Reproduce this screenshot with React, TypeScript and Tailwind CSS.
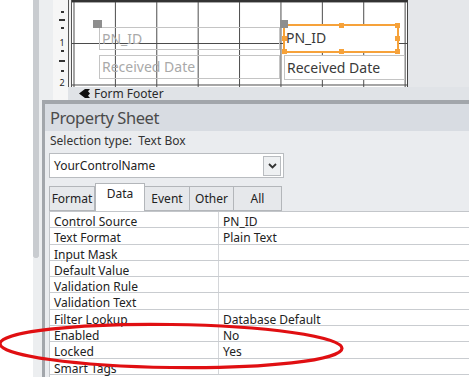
import React from 'react'

const ROWS: [string, string][] = [
  ['Control Source', 'PN_ID'],
  ['Text Format', 'Plain Text'],
  ['Input Mask', ''],
  ['Default Value', ''],
  ['Validation Rule', ''],
  ['Validation Text', ''],
  ['Filter Lookup', 'Database Default'],
  ['Enabled', 'No'],
  ['Locked', 'Yes'],
  ['Smart Tags', ''],
]

const TABS = ['Format', 'Data', 'Event', 'Other', 'All']
const TAB_WIDTHS = ['w-[46px]', 'w-[50px]', 'w-[45px]', 'w-[44px]', 'w-[48px]']

// ruler ticks down the left side of the design grid
const RulerMarks = () => (
  <div className="flex flex-col items-center pt-[11px] pl-[3px] text-[9px] leading-[9px] text-[#222]">
    <div className="w-[3px] h-[2px] bg-[#333]" />
    <div className="w-[6px] h-[2px] bg-[#333] mt-[6px]" />
    <div className="w-[3px] h-[2px] bg-[#333] mt-[6px]" />
    <div className="mt-[9px]">1</div>
    <div className="w-[3px] h-[2px] bg-[#333] mt-[3px]" />
    <div className="w-[6px] h-[2px] bg-[#333] mt-[8px]" />
    <div className="w-[3px] h-[2px] bg-[#333] mt-[8px]" />
    <div className="mt-[6px]">2</div>
  </div>
)

const Handle = ({ className }: { className: string }) => (
  <span className={`absolute w-[5px] h-[5px] bg-[#f6a23a] ${className}`} />
)

export default function App() {
  return (
    <div className="relative w-[469px] h-[377px] overflow-hidden bg-white flex font-['Noto_Sans','Open_Sans',sans-serif]">
      {/* left margin + scroll thumb */}
      <div className="w-[33px] shrink-0 bg-white" />
      <div className="w-[6px] shrink-0 flex flex-col">
        <div className="h-[258px] bg-[#c9ccd0] rounded-b-[2px]" />
        <div className="flex-1 bg-[#eceef0]" />
      </div>

      <div className="flex-1 flex flex-col">
        {/* design area */}
        <div className="h-[87px] flex">
          <div className="w-[14px] bg-[#eceef0]" />
          <div className="w-[15px] bg-[#f6f6f6] overflow-hidden">
            <RulerMarks />
          </div>
          <div className="w-[4px] border-x border-[#555] bg-[#f3f3f3]" />
          <div className="relative w-[336px] border-r border-[#444] border-t-2 border-t-[#333] bg-white bg-[linear-gradient(to_right,#4a4a4a_1px,transparent_1px),linear-gradient(to_bottom,#4a4a4a_1px,transparent_1px)] bg-[size:41.4px_41.5px] bg-[position:1.5px_-0.5px]">
            {/* left labels (ghosted) */}
            <div className="absolute left-[27px] top-[25px] w-[181px] h-[23px] border border-[#c4c4c4] text-[14px] leading-[21px] text-[#a9a9a9] pl-[2px]">PN_ID</div>
            <div className="absolute left-[27px] top-[53px] w-[181px] h-[24px] border border-[#c4c4c4] text-[14px] leading-[22px] text-[#a9a9a9] pl-[2px]">Received Date</div>
            <span className="absolute left-[21px] top-[18px] w-[9px] h-[8px] bg-[#8e8e8e]" />

            {/* right text boxes */}
            <div className="absolute left-[212px] top-[53px] w-[121px] h-[25px] border border-[#c4c4c4] bg-white text-[14px] leading-[23px] text-[#3a3a3a] pl-[2px]">Received Date</div>
            <div className="absolute left-[211px] top-[22px] w-[116px] h-[29px] border-2 border-[#f6a23a] bg-white text-[14px] leading-[23px] text-[#3a3a3a] pl-[1px]">
              PN_ID
              <Handle className="-left-[3px] -top-[3px]" />
              <Handle className="left-[54px] -top-[3px]" />
              <Handle className="-right-[3px] -top-[3px]" />
              <Handle className="-left-[3px] top-[10px]" />
              <Handle className="-right-[3px] top-[10px]" />
              <Handle className="-left-[3px] -bottom-[3px]" />
              <Handle className="left-[54px] -bottom-[3px]" />
              <Handle className="-right-[3px] -bottom-[3px]" />
            </div>
            <span className="absolute left-[208px] top-[18px] w-[8px] h-[8px] bg-[#8e8e8e]" />
          </div>
          <div className="flex-1 bg-[#e5e7ea]" />
        </div>

        {/* form footer bar */}
        <div className="h-[13px] flex">
          <div className="w-[14px] bg-[#eceef0]" />
          <div className="w-[15px] bg-[#f6f6f6]" />
          <div className="flex-1 bg-[#e0e3e7] flex items-center pl-[11px] gap-[4px] text-[12px] leading-[12px] text-[#2a2a2a]">
            <svg width="11" height="9" viewBox="0 0 11 9">
              <path d="M0 4.5 L6 0 L11 0 L9 2.2 L11 4.5 L9 6.8 L11 9 L6 9 Z" fill="#111" />
            </svg>
            <span>Form Footer</span>
          </div>
        </div>

        <div className="h-[4px] flex">
          <div className="w-[3px] bg-[#eceef0]" />
          <div className="flex-1 bg-[#a2a6ab]" />
        </div>

        {/* property sheet */}
        <div className="flex-1 flex">
          <div className="w-[3px] bg-[#eceef0]" />
          <div className="w-[3px] bg-[#a2a6ab]" />
          <div className="flex-1 flex flex-col bg-[#eaecef]">
            <div className="h-[27px] bg-[#d8dce2] pl-[5px] text-[16.5px] tracking-[-0.45px] leading-[28px] text-[#4b4b4b]">Property Sheet</div>
            <div className="h-[19px] pl-[5px] text-[12px] leading-[19px] text-[#333] whitespace-pre">Selection type:  Text Box</div>

            <div className="mt-[3px] ml-[4px] w-[235px] h-[25px] border border-[#b9bcc0] bg-white flex items-center justify-between pl-[4px] pr-[2px]">
              <span className="text-[12px] leading-[16px] pt-[1px] text-[#222]">YourControlName</span>
              <div className="w-[18px] h-[20px] border border-[#b9bcc0] bg-[#eef0f2] flex items-center justify-center">
                <svg width="9" height="6" viewBox="0 0 9 6">
                  <path d="M1 1 L4.5 4.5 L8 1" stroke="#333" strokeWidth="1.8" fill="none" />
                </svg>
              </div>
            </div>

            <div className="mt-[5px] ml-[4px] h-[28px] flex items-end">
              {TABS.map((t, i) =>
                t === 'Data' ? (
                  <div key={t} className={`${TAB_WIDTHS[i]} h-[28px] border border-b-0 border-[#b3b6ba] bg-white text-[12px] leading-[20px] text-center text-[#222]`}>{t}</div>
                ) : (
                  <div key={t} className={`${TAB_WIDTHS[i]} h-[25px] border border-l-0 first:border-l border-[#b3b6ba] bg-[#e6e8eb] text-[12px] leading-[23px] text-center text-[#222]`}>{t}</div>
                ),
              )}
            </div>

            <div className="ml-[4px] flex-1 bg-white border-t border-l border-[#c3c6ca]">
              {ROWS.map(([label, value]) => (
                <div key={label} className="h-[16.3px] flex border-b border-[#c9ccd0] text-[12px] leading-[17px] text-[#222]">
                  <div className="w-[169px] pl-[4px] pt-[1px] border-r border-[#d4d6d9] whitespace-nowrap">{label}</div>
                  <div className="flex-1 pl-[4px] pt-[1px] whitespace-nowrap">{value}</div>
                </div>
              ))}
            </div>
          </div>
        </div>
      </div>

      {/* hand-drawn red highlight */}
      <svg className="absolute left-0 top-0 pointer-events-none" width="469" height="377" viewBox="0 0 469 377">
        <ellipse cx="171" cy="346" rx="171" ry="21.5" transform="rotate(0.8 171 346)" fill="none" stroke="#e00f12" strokeWidth="3.2" />
      </svg>
    </div>
  )
}
